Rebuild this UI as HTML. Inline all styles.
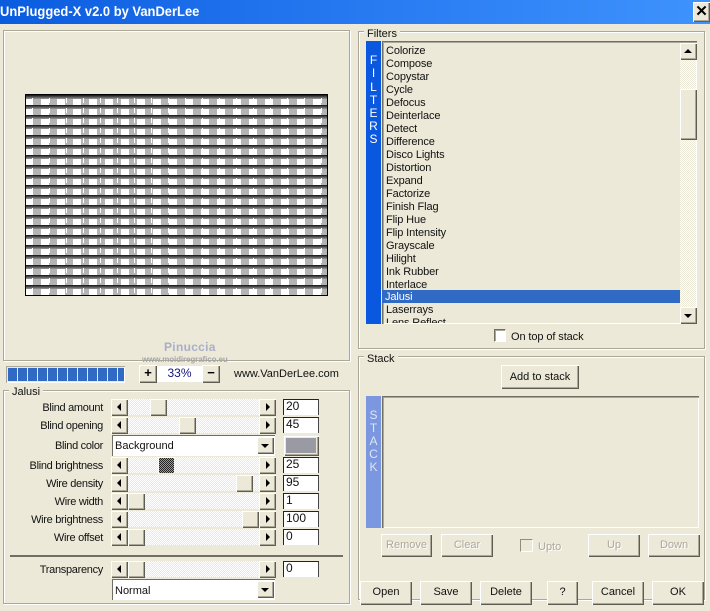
<!DOCTYPE html>
<html><head><meta charset="utf-8"><style>
html,body{margin:0;padding:0}
body{width:710px;height:611px;overflow:hidden;background:#ece9d8;position:relative;font:11px/13px "Liberation Sans",Arial,sans-serif;color:#111}
body *{position:absolute;box-sizing:border-box}
.tb{left:0;top:0;width:710px;height:24px;background:linear-gradient(90deg,#0a5cdf,#2274ee 40%,#3f93fd)}
.tt{left:0;top:3px;font:bold 14px/17px "Liberation Sans",sans-serif;color:#fff;white-space:nowrap;transform:scaleX(.925);transform-origin:0 0}
.g{border:1px solid #aca899;box-shadow:inset 1px 1px #fff,1px 1px #fff}
.gl{background:#ece9d8;padding:0 3px;white-space:nowrap}
.b{background:#ece9d8;box-shadow:inset 1px 1px #fff,inset -1px -1px #5f5d52,inset -2px -2px #aca899;text-align:center;white-space:nowrap}
.bt{line-height:22px;font-size:11px}
.d{color:#aca899;text-shadow:1px 1px #fff}
.trk{left:127px;width:132px;height:16px;background:repeating-conic-gradient(#ece9d8 0 25%,#fff 0 50%) 0 0/2px 2px}
.al,.ar,.au,.ad{width:0;height:0;border-style:solid;border-color:transparent}
.al{left:6px;top:4px;border-width:4px 4px 4px 0;border-right-color:#000}
.ar{left:7px;top:4px;border-width:4px 0 4px 4px;border-left-color:#000}
.au{left:4px;top:6px;border-width:0 4px 4px 4px;border-bottom-color:#000}
.ad{left:4px;top:7px;border-width:4px 4px 0 4px;border-top-color:#000}
.lb{right:607px;white-space:nowrap;letter-spacing:-.3px}
.e{left:283px;width:36px;height:16px;background:#fff;border-top:1px solid #222;border-left:1px solid #222;border-right:1px solid #444;padding-left:2px;line-height:13px;font-size:12px}
.c{background:#fff;left:112px;width:163px;box-shadow:inset 1px 1px #716f64}
.li{white-space:nowrap;letter-spacing:-.12px}
.let{width:15px;text-align:center;color:#fff;font-size:12px}
.ck{background:#fff;border-top:1px solid #716f64;border-left:1px solid #716f64;border-right:1px solid #fff;border-bottom:1px solid #fff;box-shadow:inset 1px 1px #aca899}
.pb{top:368px;width:9px;height:13px;background:#316ac5}
</style></head><body>
<div class="tb"></div>
<div class="tt">UnPlugged-X v2.0 by VanDerLee</div>
<div class="b" style="left:693px;top:2px;width:17px;height:20px;font:bold 15px/19px 'Liberation Sans',sans-serif;color:#000">✕</div>

<div class="g" style="left:3px;top:30px;width:347px;height:331px"></div>
<div style="left:25px;top:94px;width:303px;height:202px;border:1px solid #000;overflow:hidden;background:
repeating-linear-gradient(180deg,#222 0,#222 1px,#444 1px,#444 2px,#666 2px,#666 3px,#888 3px,#888 4px,transparent 4px,transparent 10px),
repeating-linear-gradient(90deg,#fff 0,#fff 7px,#b4b4b4 7px,#b4b4b4 15px,#fff 15px,#fff 16px)"></div>
<div style="left:32px;top:95px;width:290px;height:200px;background:repeating-linear-gradient(90deg,#fff 0,#fff 1px,transparent 1px,transparent 17px);-webkit-mask:repeating-linear-gradient(180deg,transparent 0,transparent 3px,#000 3px,#000 8px,transparent 8px,transparent 10px)"></div>
<div style="left:164px;top:340px;color:#a9afc9;font:bold 12px/15px 'Liberation Sans',sans-serif;letter-spacing:.3px;white-space:nowrap">Pinuccia</div>
<div style="left:142px;top:355px;color:#a5a5a9;font:bold 8px/10px 'Liberation Sans',sans-serif;letter-spacing:-.1px;white-space:nowrap">www.moidiregrafico.eu</div>

<div style="left:6px;top:366px;width:119px;height:17px;box-shadow:inset 1px 1px #aca899,inset -1px -1px #fff"></div>
<div class="pb" style="left:8px"></div><div class="pb" style="left:18px"></div><div class="pb" style="left:28px"></div><div class="pb" style="left:38px"></div><div class="pb" style="left:48px"></div><div class="pb" style="left:58px"></div><div class="pb" style="left:68px"></div><div class="pb" style="left:78px"></div><div class="pb" style="left:88px"></div><div class="pb" style="left:98px"></div><div class="pb" style="left:108px"></div><div class="pb" style="left:118px;width:6px"></div>
<div class="b" style="left:139px;top:365px;width:18px;height:18px;font:bold 13px/16px 'Liberation Sans',sans-serif;color:#000">+</div>
<div style="left:157px;top:366px;width:45px;height:16px;background:#fff;color:#14147a;text-align:center;line-height:15px;font-size:12px">33%</div>
<div class="b" style="left:202px;top:365px;width:18px;height:18px;font:bold 13px/16px 'Liberation Sans',sans-serif;color:#000">−</div>
<div style="left:234px;top:368px;white-space:nowrap">www.VanDerLee.com</div>

<div class="g" style="left:3px;top:390px;width:347px;height:214px"></div>
<div class="gl" style="left:9px;top:386px">Jalusi</div>

<div class="lb" style="top:402px">Blind amount</div>
<div class="trk" style="top:399px"></div>
<div class="b" style="left:111px;top:399px;width:17px;height:17px"><i class="al"></i></div>
<div class="b" style="left:150px;top:399px;width:17px;height:17px"></div>
<div class="b" style="left:259px;top:399px;width:17px;height:17px"><i class="ar"></i></div>
<div class="e" style="top:399px">20</div>

<div class="lb" style="top:420px">Blind opening</div>
<div class="trk" style="top:417px"></div>
<div class="b" style="left:111px;top:417px;width:17px;height:17px"><i class="al"></i></div>
<div class="b" style="left:179px;top:417px;width:17px;height:17px"></div>
<div class="b" style="left:259px;top:417px;width:17px;height:17px"><i class="ar"></i></div>
<div class="e" style="top:417px">45</div>

<div class="lb" style="top:440px">Blind color</div>
<div class="c" style="top:435px;height:21px;padding:4px 0 0 3px;line-height:15px;font-size:11px">Background</div>
<div class="b" style="left:257px;top:437px;width:17px;height:17px"><i class="ad" style="left:4px;top:7px"></i></div>
<div class="b" style="left:284px;top:436px;width:35px;height:20px"></div>
<div style="left:286px;top:438px;width:30px;height:15px;background:#9a9aa5"></div>

<div class="lb" style="top:460px">Blind brightness</div>
<div class="trk" style="top:457px"></div>
<div class="b" style="left:111px;top:457px;width:17px;height:17px"><i class="al"></i></div>
<div style="left:158px;top:457px;width:17px;height:17px;box-shadow:inset 1px 1px #fff"></div>
<div style="left:159px;top:458px;width:15px;height:15px;background:repeating-conic-gradient(#222 0 25%,#9a9a9a 0 50%) 0 0/2px 2px"></div>
<div class="b" style="left:259px;top:457px;width:17px;height:17px"><i class="ar"></i></div>
<div class="e" style="top:457px">25</div>

<div class="lb" style="top:478px">Wire density</div>
<div class="trk" style="top:475px"></div>
<div class="b" style="left:111px;top:475px;width:17px;height:17px"><i class="al"></i></div>
<div class="b" style="left:236px;top:475px;width:17px;height:17px"></div>
<div class="b" style="left:259px;top:475px;width:17px;height:17px"><i class="ar"></i></div>
<div class="e" style="top:475px">95</div>

<div class="lb" style="top:496px">Wire width</div>
<div class="trk" style="top:493px"></div>
<div class="b" style="left:111px;top:493px;width:17px;height:17px"><i class="al"></i></div>
<div class="b" style="left:128px;top:493px;width:17px;height:17px"></div>
<div class="b" style="left:259px;top:493px;width:17px;height:17px"><i class="ar"></i></div>
<div class="e" style="top:493px">1</div>

<div class="lb" style="top:514px">Wire brightness</div>
<div class="trk" style="top:511px"></div>
<div class="b" style="left:111px;top:511px;width:17px;height:17px"><i class="al"></i></div>
<div class="b" style="left:242px;top:511px;width:17px;height:17px"></div>
<div class="b" style="left:259px;top:511px;width:17px;height:17px"><i class="ar"></i></div>
<div class="e" style="top:511px">100</div>

<div class="lb" style="top:532px">Wire offset</div>
<div class="trk" style="top:529px"></div>
<div class="b" style="left:111px;top:529px;width:17px;height:17px"><i class="al"></i></div>
<div class="b" style="left:128px;top:529px;width:17px;height:17px"></div>
<div class="b" style="left:259px;top:529px;width:17px;height:17px"><i class="ar"></i></div>
<div class="e" style="top:529px">0</div>

<div style="left:10px;top:555px;width:333px;height:2px;background:#716f64"></div>

<div class="lb" style="top:564px">Transparency</div>
<div class="trk" style="top:561px"></div>
<div class="b" style="left:111px;top:561px;width:17px;height:17px"><i class="al"></i></div>
<div class="b" style="left:128px;top:561px;width:17px;height:17px"></div>
<div class="b" style="left:259px;top:561px;width:17px;height:17px"><i class="ar"></i></div>
<div class="e" style="top:561px">0</div>

<div class="c" style="top:579px;height:21px;padding:5px 0 0 3px;line-height:15px;font-size:11px">Normal</div>
<div class="b" style="left:257px;top:581px;width:17px;height:17px"><i class="ad" style="left:4px;top:7px"></i></div>

<div class="g" style="left:358px;top:31px;width:347px;height:318px"></div>
<div class="gl" style="left:364px;top:28px">Filters</div>
<div style="left:366px;top:41px;width:15px;height:283px;background:#0a57e0"></div>
<div class="let" style="left:366px;top:54px">F</div>
<div class="let" style="left:366px;top:67px">I</div>
<div class="let" style="left:366px;top:81px">L</div>
<div class="let" style="left:366px;top:94px">T</div>
<div class="let" style="left:366px;top:107px">E</div>
<div class="let" style="left:366px;top:120px">R</div>
<div class="let" style="left:366px;top:133px">S</div>
<div style="left:382px;top:41px;width:315px;height:283px;box-shadow:inset 1px 1px #716f64,inset 2px 2px #aca899,inset -1px -1px #fff"></div>
<div style="left:382px;top:43px;width:298px;height:280px;overflow:hidden">
<div style="left:0;top:247px;width:298px;height:13px;background:#316ac5"></div>
<div class="li" style="left:4px;top:2px">Colorize</div>
<div class="li" style="left:4px;top:15px">Compose</div>
<div class="li" style="left:4px;top:28px">Copystar</div>
<div class="li" style="left:4px;top:41px">Cycle</div>
<div class="li" style="left:4px;top:54px">Defocus</div>
<div class="li" style="left:4px;top:67px">Deinterlace</div>
<div class="li" style="left:4px;top:80px">Detect</div>
<div class="li" style="left:4px;top:93px">Difference</div>
<div class="li" style="left:4px;top:106px">Disco Lights</div>
<div class="li" style="left:4px;top:119px">Distortion</div>
<div class="li" style="left:4px;top:132px">Expand</div>
<div class="li" style="left:4px;top:145px">Factorize</div>
<div class="li" style="left:4px;top:158px">Finish Flag</div>
<div class="li" style="left:4px;top:171px">Flip Hue</div>
<div class="li" style="left:4px;top:184px">Flip Intensity</div>
<div class="li" style="left:4px;top:197px">Grayscale</div>
<div class="li" style="left:4px;top:210px">Hilight</div>
<div class="li" style="left:4px;top:223px">Ink Rubber</div>
<div class="li" style="left:4px;top:236px">Interlace</div>
<div class="li" style="left:3px;top:248px;color:#fff">Jalusi</div>
<div class="li" style="left:4px;top:261px">Laserrays</div>
<div class="li" style="left:4px;top:274px">Lens Reflect</div>
</div>
<div style="left:680px;top:43px;width:16px;height:280px;background:repeating-conic-gradient(#ece9d8 0 25%,#fff 0 50%) 0 0/2px 2px"></div>
<div class="b" style="left:680px;top:43px;width:17px;height:17px"><i class="au"></i></div>
<div class="b" style="left:680px;top:89px;width:17px;height:51px"></div>
<div class="b" style="left:680px;top:307px;width:17px;height:17px"><i class="ad"></i></div>

<div class="ck" style="left:494px;top:329px;width:12px;height:13px"></div>
<div style="left:511px;top:331px;white-space:nowrap;font-size:11px;letter-spacing:-.1px">On top of stack</div>

<div class="g" style="left:358px;top:356px;width:347px;height:244px"></div>
<div class="gl" style="left:364px;top:353px">Stack</div>
<div class="b bt" style="left:501px;top:365px;width:78px;height:24px;line-height:25px">Add to stack</div>
<div style="left:366px;top:396px;width:15px;height:132px;background:#7b97e0"></div>
<div class="let" style="left:366px;top:409px;color:#dfe5f5">S</div>
<div class="let" style="left:366px;top:422px;color:#dfe5f5">T</div>
<div class="let" style="left:366px;top:435px;color:#dfe5f5">A</div>
<div class="let" style="left:366px;top:448px;color:#dfe5f5">C</div>
<div class="let" style="left:366px;top:461px;color:#dfe5f5">K</div>
<div style="left:382px;top:396px;width:317px;height:132px;box-shadow:inset 1px 1px #716f64,inset 2px 2px #aca899,inset -1px -1px #fff"></div>

<div class="b bt d" style="left:381px;top:534px;width:51px;height:23px;line-height:23px">Remove</div>
<div class="b bt d" style="left:441px;top:534px;width:52px;height:23px;line-height:23px">Clear</div>
<div style="left:520px;top:539px;width:13px;height:13px;border-top:1px solid #8f8d80;border-left:1px solid #8f8d80;border-right:1px solid #fff;border-bottom:1px solid #fff"></div>
<div class="d" style="left:538px;top:541px;font-size:11px">Upto</div>
<div class="b bt d" style="left:588px;top:534px;width:52px;height:23px;line-height:23px">Up</div>
<div class="b bt d" style="left:648px;top:534px;width:52px;height:23px;line-height:23px">Down</div>

<div class="b bt" style="left:360px;top:581px;width:52px;height:24px">Open</div>
<div class="b bt" style="left:420px;top:581px;width:52px;height:24px">Save</div>
<div class="b bt" style="left:480px;top:581px;width:52px;height:24px">Delete</div>
<div class="b bt" style="left:547px;top:581px;width:31px;height:24px">?</div>
<div class="b bt" style="left:592px;top:581px;width:52px;height:24px">Cancel</div>
<div class="b bt" style="left:652px;top:581px;width:52px;height:24px">OK</div>
</body></html>
